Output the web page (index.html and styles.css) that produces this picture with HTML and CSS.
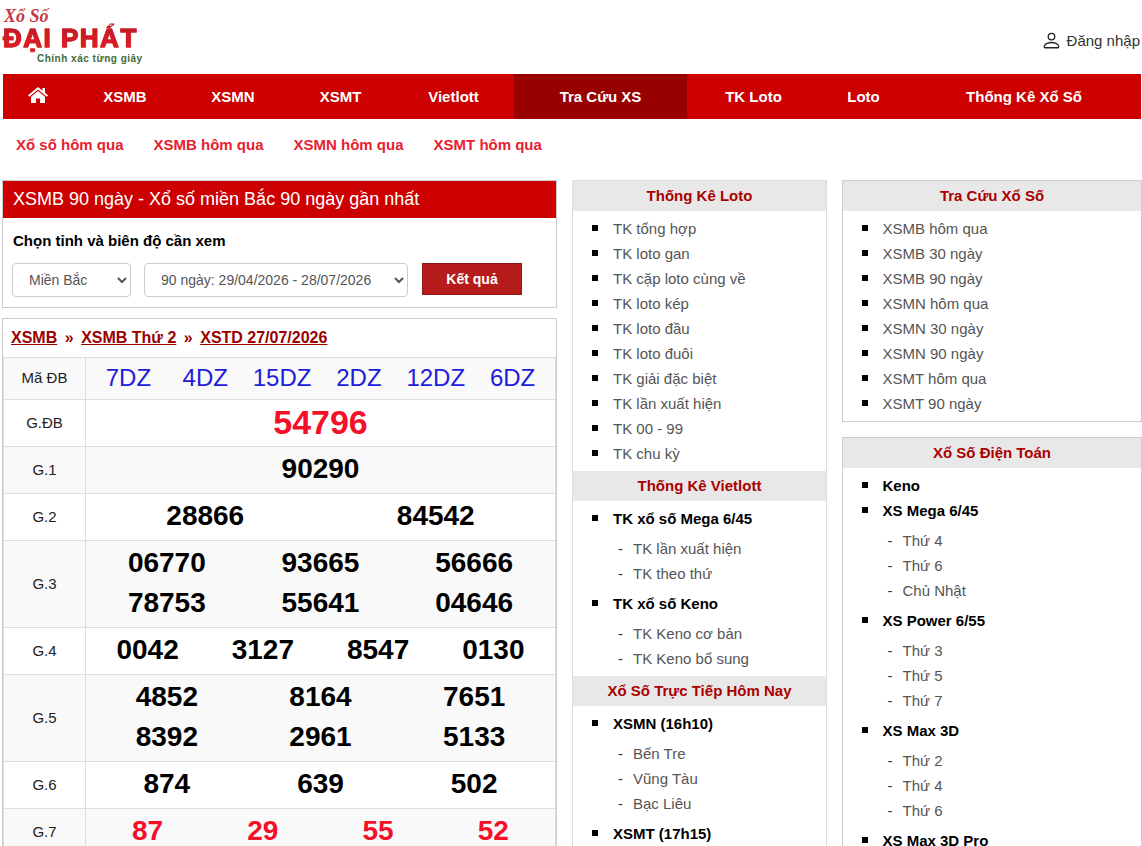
FILE: index.html
```html
<!DOCTYPE html>
<html lang="vi">
<head>
    <meta charset="UTF-8">
    <meta name="viewport" content="width=device-width, initial-scale=1.0">
    <title>XSMB 90 ngày - Xổ số Đại Phát</title>
    <link rel="stylesheet" href="styles.css">
</head>
<body>

    <header class="top">
        <a class="logo" href="#">
            <span class="logo-script">Xổ Số</span>
            <span class="logo-name">ĐẠI PHÁT</span>
            <span class="logo-tag">Chính xác từng giây</span>
        </a>
        <a class="login" href="#">
            <svg class="login-icon" viewBox="0 0 16 16" fill="currentColor"><path d="M8 8a3 3 0 1 0 0-6 3 3 0 0 0 0 6zm2-3a2 2 0 1 1-4 0 2 2 0 0 1 4 0zm4 8c0 1-1 1-1 1H3s-1 0-1-1 1-4 6-4 6 3 6 4zm-1-.004c-.001-.246-.154-.986-.832-1.664C11.516 10.68 10.289 10 8 10c-2.29 0-3.516.68-4.168 1.332-.678.678-.83 1.418-.832 1.664h10z"/></svg>
            Đăng nhập
        </a>
    </header>

    <nav class="menu">
        <a href="#"><svg class="home-icon" viewBox="0 0 20 16" fill="#fff"><path d="M10 0 0 8.2l1.3 1.5L10 2.6l8.7 7.1L20 8.2l-3-2.5V1h-2.5v2.6z"/><path d="M10 4 3 9.7V16h5v-4.5h4V16h5V9.7z"/></svg></a>
        <a href="#">XSMB</a>
        <a href="#">XSMN</a>
        <a href="#">XSMT</a>
        <a href="#">Vietlott</a>
        <a href="#" class="active">Tra Cứu XS</a>
        <a href="#">TK Loto</a>
        <a href="#">Loto</a>
        <a href="#">Thống Kê Xổ Số</a>
    </nav>

    <div class="submenu">
        <a href="#">Xổ số hôm qua</a>
        <a href="#">XSMB hôm qua</a>
        <a href="#">XSMN hôm qua</a>
        <a href="#">XSMT hôm qua</a>
    </div>

    <div class="columns">
        <main class="col-main">
            <section class="box">
                <h1 class="box-title">XSMB 90 ngày - Xổ số miền Bắc 90 ngày gần nhất</h1>
                <form class="filter">
                    <label class="filter-label">Chọn tỉnh và biên độ cần xem</label>
                    <div class="filter-row">
                        <select class="select-region"><option>Miền Bắc</option></select>
                        <select class="select-range"><option>90 ngày: 29/04/2026 - 28/07/2026</option></select>
                        <button type="button" class="btn-result">Kết quả</button>
                    </div>
                </form>
            </section>

            <section class="box result">
                <div class="crumbs">
                    <a href="#">XSMB</a><span>»</span><a href="#">XSMB Thứ 2</a><span>»</span><a href="#">XSTD 27/07/2026</a>
                </div>
                <table class="kqxs">
                    <tr class="row-code">
                        <td class="label">Mã ĐB</td>
                        <td><div class="nums n6 code"><span>7DZ</span><span>4DZ</span><span>15DZ</span><span>2DZ</span><span>12DZ</span><span>6DZ</span></div></td>
                    </tr>
                    <tr>
                        <td class="label">G.ĐB</td>
                        <td><div class="nums n1 special"><span>54796</span></div></td>
                    </tr>
                    <tr class="alt">
                        <td class="label">G.1</td>
                        <td><div class="nums n1"><span>90290</span></div></td>
                    </tr>
                    <tr>
                        <td class="label">G.2</td>
                        <td><div class="nums n2"><span>28866</span><span>84542</span></div></td>
                    </tr>
                    <tr class="alt">
                        <td class="label">G.3</td>
                        <td><div class="nums n3"><span>06770</span><span>93665</span><span>56666</span><span>78753</span><span>55641</span><span>04646</span></div></td>
                    </tr>
                    <tr>
                        <td class="label">G.4</td>
                        <td><div class="nums n4"><span>0042</span><span>3127</span><span>8547</span><span>0130</span></div></td>
                    </tr>
                    <tr class="alt">
                        <td class="label">G.5</td>
                        <td><div class="nums n3"><span>4852</span><span>8164</span><span>7651</span><span>8392</span><span>2961</span><span>5133</span></div></td>
                    </tr>
                    <tr>
                        <td class="label">G.6</td>
                        <td><div class="nums n3"><span>874</span><span>639</span><span>502</span></div></td>
                    </tr>
                    <tr class="alt">
                        <td class="label">G.7</td>
                        <td><div class="nums n4 red"><span>87</span><span>29</span><span>55</span><span>52</span></div></td>
                    </tr>
                </table>
            </section>
        </main>

        <aside class="col-mid">
            <section class="side">
                <h3 class="side-title">Thống Kê Loto</h3>
                <ul class="side-list">
                    <li><a href="#">TK tổng hợp</a></li>
                    <li><a href="#">TK loto gan</a></li>
                    <li><a href="#">TK cặp loto cùng về</a></li>
                    <li><a href="#">TK loto kép</a></li>
                    <li><a href="#">TK loto đầu</a></li>
                    <li><a href="#">TK loto đuôi</a></li>
                    <li><a href="#">TK giải đặc biệt</a></li>
                    <li><a href="#">TK lần xuất hiện</a></li>
                    <li><a href="#">TK 00 - 99</a></li>
                    <li><a href="#">TK chu kỳ</a></li>
                </ul>
                <h3 class="side-title">Thống Kê Vietlott</h3>
                <ul class="side-list">
                    <li><b>TK xổ số Mega 6/45</b>
                        <ul class="sub-list">
                            <li><a href="#">TK lần xuất hiện</a></li>
                            <li><a href="#">TK theo thứ</a></li>
                        </ul>
                    </li>
                    <li><b>TK xổ số Keno</b>
                        <ul class="sub-list">
                            <li><a href="#">TK Keno cơ bản</a></li>
                            <li><a href="#">TK Keno bổ sung</a></li>
                        </ul>
                    </li>
                </ul>
                <h3 class="side-title">Xổ Số Trực Tiếp Hôm Nay</h3>
                <ul class="side-list">
                    <li><b>XSMN (16h10)</b>
                        <ul class="sub-list">
                            <li><a href="#">Bến Tre</a></li>
                            <li><a href="#">Vũng Tàu</a></li>
                            <li><a href="#">Bạc Liêu</a></li>
                        </ul>
                    </li>
                    <li><b>XSMT (17h15)</b></li>
                </ul>
            </section>
        </aside>

        <aside class="col-right">
            <section class="side">
                <h3 class="side-title">Tra Cứu Xổ Số</h3>
                <ul class="side-list">
                    <li><a href="#">XSMB hôm qua</a></li>
                    <li><a href="#">XSMB 30 ngày</a></li>
                    <li><a href="#">XSMB 90 ngày</a></li>
                    <li><a href="#">XSMN hôm qua</a></li>
                    <li><a href="#">XSMN 30 ngày</a></li>
                    <li><a href="#">XSMN 90 ngày</a></li>
                    <li><a href="#">XSMT hôm qua</a></li>
                    <li><a href="#">XSMT 90 ngày</a></li>
                </ul>
            </section>
            <section class="side">
                <h3 class="side-title">Xổ Số Điện Toán</h3>
                <ul class="side-list">
                    <li><b>Keno</b></li>
                    <li><b>XS Mega 6/45</b>
                        <ul class="sub-list">
                            <li><a href="#">Thứ 4</a></li>
                            <li><a href="#">Thứ 6</a></li>
                            <li><a href="#">Chủ Nhật</a></li>
                        </ul>
                    </li>
                    <li><b>XS Power 6/55</b>
                        <ul class="sub-list">
                            <li><a href="#">Thứ 3</a></li>
                            <li><a href="#">Thứ 5</a></li>
                            <li><a href="#">Thứ 7</a></li>
                        </ul>
                    </li>
                    <li><b>XS Max 3D</b>
                        <ul class="sub-list">
                            <li><a href="#">Thứ 2</a></li>
                            <li><a href="#">Thứ 4</a></li>
                            <li><a href="#">Thứ 6</a></li>
                        </ul>
                    </li>
                    <li><b>XS Max 3D Pro</b></li>
                </ul>
            </section>
        </aside>
    </div>

</body>
</html>
```

FILE: styles.css
```css
html, body {
    height: 846px;
    overflow: hidden;
}
body {
    margin: 0;
    background: #fff;
    color: #000;
    font-family: "Liberation Sans", Arial, sans-serif;
    font-size: 15px;
}
a {
    text-decoration: none;
}

/* header */
.top {
    display: flex;
    justify-content: space-between;
    align-items: center;
    height: 73px;
    padding: 0 2px 0 3px;
}
.logo {
    display: flex;
    flex-direction: column;
    align-self: flex-start;
    width: 140px;
    padding-top: 7px;
}
.logo-script {
    font-family: "Liberation Serif", serif;
    font-style: italic;
    font-weight: bold;
    font-size: 18px;
    line-height: 19px;
    padding-left: 1px;
    color: #c9353d;
}
.logo-name {
    font-weight: bold;
    font-size: 26px;
    line-height: 25px;
    letter-spacing: 1.5px;
    white-space: nowrap;
    background: linear-gradient(#b71c26, #ee1c25);
    -webkit-background-clip: text;
    background-clip: text;
    color: transparent;
    -webkit-text-stroke: 1px #d01c26;
}
.logo-tag {
    font-weight: bold;
    font-size: 10px;
    line-height: 13px;
    letter-spacing: 0.5px;
    margin-top: 1px;
    padding-left: 34px;
    color: #3f6b3a;
    white-space: nowrap;
}
.login {
    display: flex;
    align-items: center;
    gap: 5px;
    color: #333;
    font-size: 15px;
    margin-top: 7px;
}
.login-icon {
    width: 21px;
    height: 21px;
    color: #222;
}

/* menu */
.menu {
    display: grid;
    grid-template-columns: 69px 106px 110px 105px 121px 173px 133px 87px 234px;
    height: 45px;
    margin: 1px 1px 0 3px;
    background: #c00;
}
.menu a {
    display: flex;
    align-items: center;
    justify-content: center;
    color: #fff;
    font-size: 15px;
    font-weight: bold;
}
.menu a.active {
    background: #900;
}
.home-icon {
    width: 20px;
    height: 16px;
    margin-bottom: 3px;
}
.submenu {
    display: flex;
    gap: 30px;
    height: 50px;
    padding: 0 0 0 16px;
    align-items: center;
}
.submenu a {
    color: #e8202e;
    font-size: 15px;
    font-weight: bold;
}

/* columns */
.columns {
    display: flex;
    align-items: flex-start;
    gap: 15px;
    padding: 11px 0 0 2px;
}
.col-main {
    width: 555px;
    flex-shrink: 0;
}
.col-mid {
    width: 255px;
    flex-shrink: 0;
}
.col-right {
    width: 300px;
    flex-shrink: 0;
}

/* main boxes */
.box {
    border: 1px solid #ccc;
    margin-bottom: 10px;
}
.box-title {
    margin: 0;
    padding: 0 10px;
    background: #c00;
    color: #fff;
    font-size: 18px;
    font-weight: normal;
    line-height: 37px;
}
.filter {
    padding: 13px 10px 10px 9px;
}
.filter-label {
    display: block;
    font-size: 15px;
    font-weight: bold;
    line-height: 20px;
    margin-bottom: 12px;
    padding-left: 1px;
}
.filter-row {
    display: flex;
    align-items: flex-start;
}
.filter-row select {
    height: 34px;
    padding: 0 12px;
    background: #fff;
    border: 1px solid #ccc;
    border-radius: 4px;
    color: #555;
    font-family: inherit;
    font-size: 14px;
}
.select-region {
    width: 119px;
    margin-right: 13px;
}
.select-range {
    width: 264px;
    margin-right: 14px;
}
.btn-result {
    width: 100px;
    height: 32px;
    background: #b71c1c;
    border: 1px solid #8e1515;
    color: #fff;
    font-family: inherit;
    font-size: 14px;
    font-weight: bold;
}

/* result table */
.crumbs {
    height: 38px;
    line-height: 38px;
    padding-left: 8px;
    font-size: 16px;
    font-weight: bold;
    color: #900;
}
.crumbs a {
    color: #900;
    text-decoration: underline;
}
.crumbs span {
    margin: 0 7.5px;
}
.kqxs {
    width: 100%;
    table-layout: fixed;
    border-collapse: separate;
    border-spacing: 0;
    border-top: 1px solid #ddd;
    border-left: 1px solid #ddd;
}
.kqxs td {
    padding: 2px 4px 4px;
    border-right: 1px solid #ddd;
    border-bottom: 1px solid #ddd;
    text-align: center;
}
.kqxs td.label {
    width: 73px;
    font-size: 15px;
    color: #222;
}
.kqxs .alt td,
.kqxs .row-code td {
    background: #f9f9f9;
}
.nums {
    display: grid;
    font-size: 28px;
    font-weight: bold;
    line-height: 40px;
}
.n1 { grid-template-columns: 1fr; }
.n2 { grid-template-columns: repeat(2, 1fr); }
.n3 { grid-template-columns: repeat(3, 1fr); }
.n4 { grid-template-columns: repeat(4, 1fr); }
.n6 { grid-template-columns: repeat(6, 1fr); }
.nums.special {
    color: #f5102a;
    font-size: 34px;
}
.nums.red {
    color: #f5102a;
}
.nums.code {
    color: #2020dc;
    font-size: 24px;
    font-weight: normal;
    line-height: 35px;
}

/* side panels */
.side {
    border: 1px solid #ddd;
    margin-bottom: 15px;
}
.col-right .side {
    border-color: #ccc;
}
.side-title {
    margin: 0;
    background: #e8e8e8;
    color: #a00;
    font-size: 15px;
    font-weight: bold;
    line-height: 30px;
    text-align: center;
}
.side-list {
    margin: 0;
    padding: 5px 0 5px 40px;
    list-style: none;
}
.col-right .side-list {
    padding-left: 39.5px;
}
.side-list > li::before {
    content: "";
    display: inline-block;
    width: 6px;
    height: 6px;
    margin: 0 15px 0 -21px;
    vertical-align: 3px;
    background: #000;
}
.side-list li {
    line-height: 25px;
}
.side-list a {
    color: #555;
}
.side-list b {
    color: #000;
}
.sub-list {
    margin: 5px 0;
    padding-left: 20px;
    list-style: none;
}
.side-list > li:last-child > .sub-list {
    margin-bottom: 0;
}
.sub-list li::before {
    content: "-";
    display: inline-block;
    width: 15px;
    margin-left: -15px;
    color: #333;
}
```
